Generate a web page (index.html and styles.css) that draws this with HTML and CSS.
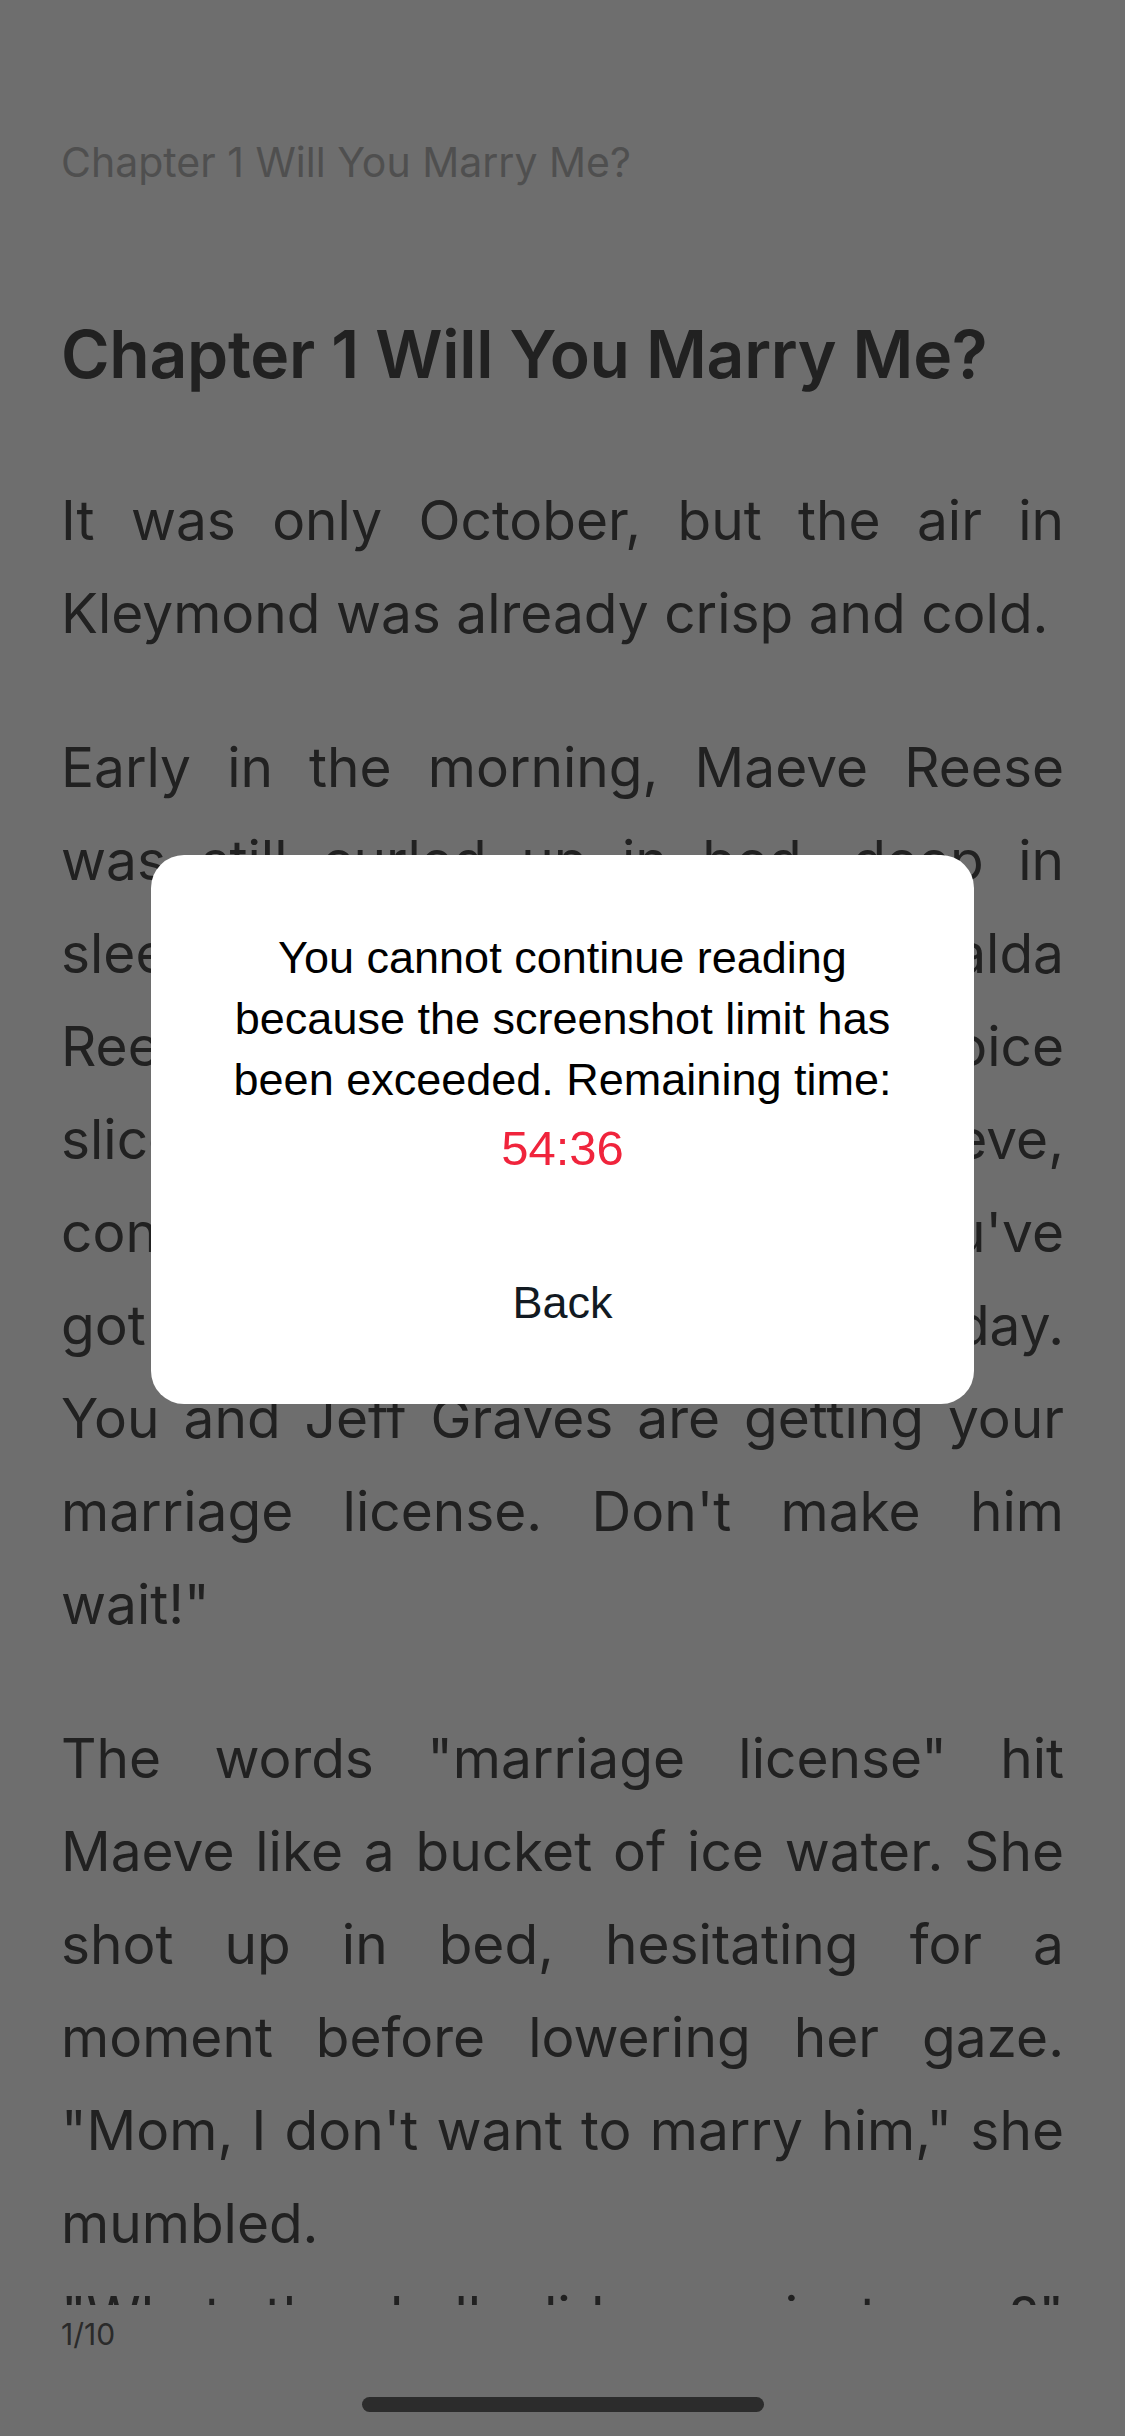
FILE: index.html
```html
<!DOCTYPE html>
<html lang="en">
<head>
<meta charset="utf-8">
<title>Chapter 1 Will You Marry Me?</title>
<link rel="stylesheet" href="styles.css">
</head>
<body>
<div class="screen">
  <header class="running-head">Chapter 1 Will You Marry Me?</header>
  <main class="reader">
    <h1 class="chapter-title">Chapter 1 Will You Marry Me?</h1>
    <p class="para">
      <span class="ln">It was only October, but the air in</span>
      <span class="ln end">Kleymond was already crisp and cold.</span>
    </p>
    <p class="para">
      <span class="ln">Early in the morning, Maeve Reese</span>
      <span class="ln">was still curled up in bed, deep in</span>
      <span class="ln">sleep, when her mother, Esmeralda</span>
      <span class="ln">Reese, burst in. Her sharp voice</span>
      <span class="ln">sliced through the silence. "Maeve,</span>
      <span class="ln">continued. "Hurry up, you've</span>
      <span class="ln">got an important appointment today.</span>
      <span class="ln">You and Jeff Graves are getting your</span>
      <span class="ln">marriage license. Don't make him</span>
      <span class="ln end">wait!"</span>
    </p>
    <p class="para">
      <span class="ln">The words "marriage license" hit</span>
      <span class="ln">Maeve like a bucket of ice water. She</span>
      <span class="ln">shot up in bed, hesitating for a</span>
      <span class="ln">moment before lowering her gaze.</span>
      <span class="ln">"Mom, I don't want to marry him," she</span>
      <span class="ln end">mumbled.</span>
      <span class="ln">"What the hell did you just say?"</span>
      <span class="ln end">Esmeralda snapped.</span>
    </p>
  </main>
  <footer class="page-no">1/10</footer>
  <div class="home-bar"></div>
</div>

<div class="scrim">
  <div class="dialog" role="alertdialog">
    <p class="dialog-msg">You cannot continue reading because the screenshot limit has been exceeded. Remaining time:</p>
    <div class="dialog-time">54:36</div>
    <button class="dialog-btn" type="button">Back</button>
  </div>
</div>
</body>
</html>
```

FILE: styles.css
```css
* {
  box-sizing: border-box;
}

html, body {
  margin: 0;
  padding: 0;
}

body {
  width: 1125px;
  height: 2436px;
  overflow: hidden;
  background: #ffffff;
  font-family: "Inter", "Noto Sans", sans-serif;
}

.screen {
  height: 2436px;
  display: flex;
  flex-direction: column;
  padding: 134px 61px 0;
  background: #ffffff;
}

.running-head {
  font-size: 41px;
  line-height: 56px;
  color: #b8b8b8;
  white-space: nowrap;
}

.reader {
  flex: 1;
  min-height: 0;
  overflow: hidden;
  margin-top: 124px;
  color: #4d4d4d;
}

.chapter-title {
  margin: 0;
  font-size: 66px;
  line-height: 80px;
  font-weight: 600;
  letter-spacing: -0.3px;
  color: #4d4d4d;
}

.para {
  margin: 80px 0 0;
  font-size: 55px;
  line-height: 93px;
}

.para + .para {
  margin-top: 61px;
}

.ln {
  display: block;
  white-space: nowrap;
  text-align: justify;
  text-align-last: justify;
}

.ln.end {
  text-align-last: left;
}

.page-no {
  margin-top: 9px;
  font-size: 30px;
  line-height: 40px;
  color: #626262;
}

.home-bar {
  width: 402px;
  height: 15px;
  margin: 43px auto 24px;
  border-radius: 8px;
  background: #666666;
}

.scrim {
  position: fixed;
  inset: 0;
  background: rgba(0, 0, 0, 0.57);
  display: flex;
  justify-content: center;
  align-items: flex-start;
  padding-top: 855px;
}

.dialog {
  width: 823px;
  background: #ffffff;
  border-radius: 33px;
  padding: 72px 60px 0;
  display: flex;
  flex-direction: column;
  align-items: center;
  font-family: "Liberation Sans", Arial, sans-serif;
  text-align: center;
}

.dialog-msg {
  margin: 0;
  font-size: 45px;
  line-height: 61px;
  color: #000000;
}

.dialog-time {
  font-size: 49px;
  line-height: 77px;
  color: #f0243c;
}

.dialog-btn {
  margin-top: 15px;
  width: 100%;
  height: 202px;
  border: 0;
  background: transparent;
  font-family: inherit;
  font-size: 45px;
  color: #121a22;
  padding: 0;
}
```
